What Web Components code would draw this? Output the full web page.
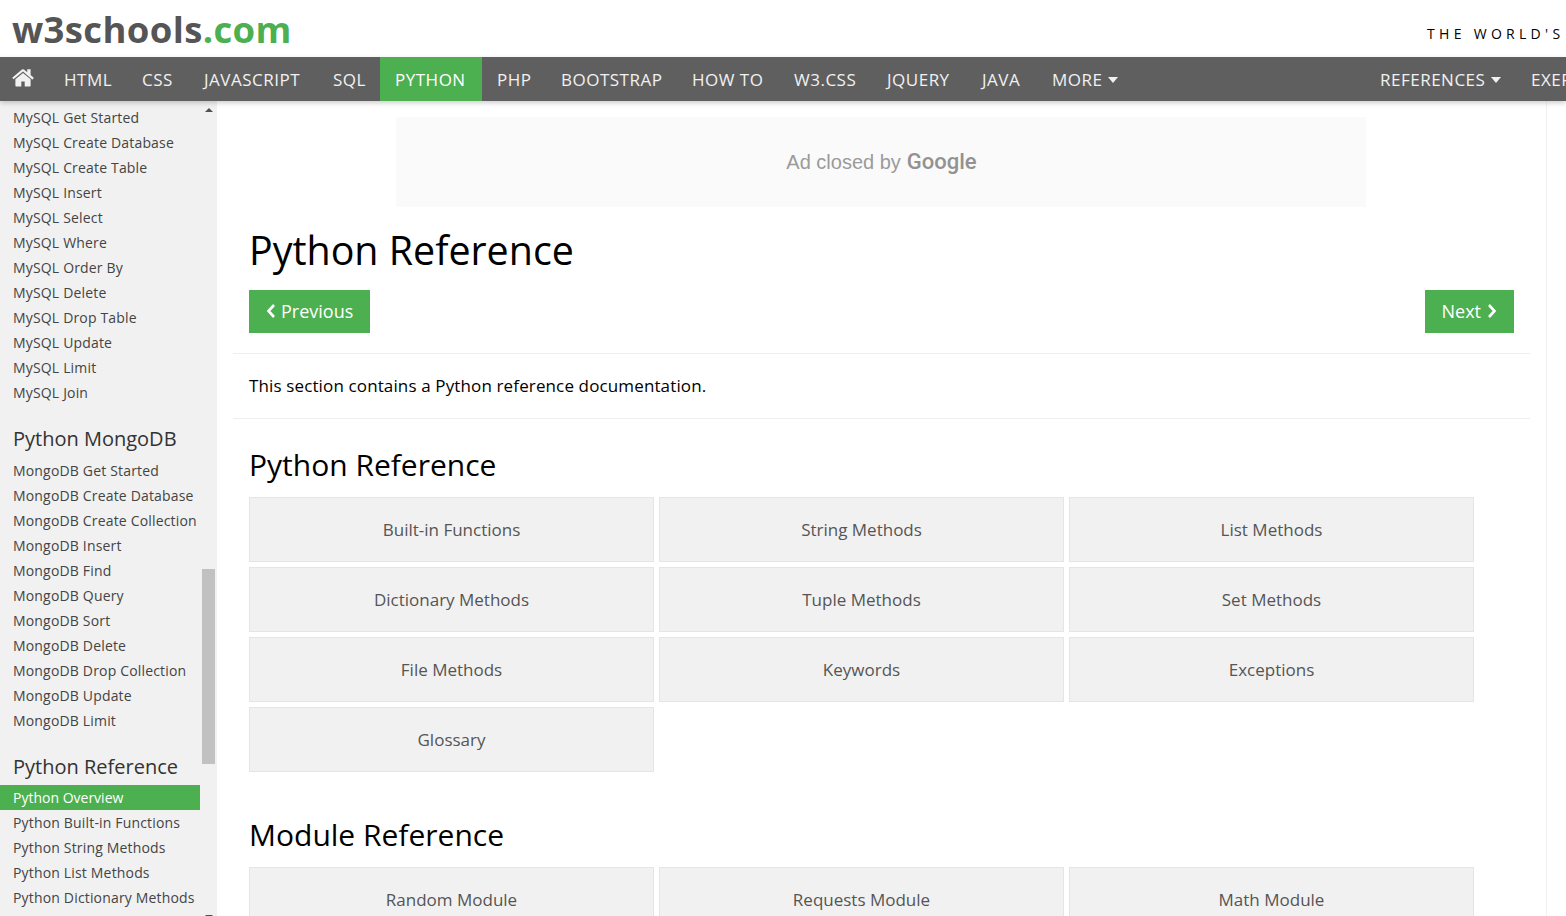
<!DOCTYPE html>
<html lang="en">
<head>
<meta charset="utf-8">
<title>Python Reference</title>
<style>
  html, body { margin: 0; height: 100%; overflow: hidden; background: #fff; }
  body { font-family: "Open Sans", "Noto Sans", sans-serif; display: flex; flex-direction: column; }
</style>
</head>
<body>

<w3-topbar></w3-topbar>

<w3-nav>
  <nav-link>HTML</nav-link>
  <nav-link>CSS</nav-link>
  <nav-link>JAVASCRIPT</nav-link>
  <nav-link>SQL</nav-link>
  <nav-link active>PYTHON</nav-link>
  <nav-link>PHP</nav-link>
  <nav-link>BOOTSTRAP</nav-link>
  <nav-link>HOW TO</nav-link>
  <nav-link>W3.CSS</nav-link>
  <nav-link>JQUERY</nav-link>
  <nav-link>JAVA</nav-link>
  <nav-link caret>MORE</nav-link>
  <nav-link slot="right" caret>REFERENCES</nav-link>
  <nav-link slot="right">EXERCISES</nav-link>
</w3-nav>

<page-body>
  <w3-sidebar slot="side">
    <side-link>MySQL Get Started</side-link>
    <side-link>MySQL Create Database</side-link>
    <side-link>MySQL Create Table</side-link>
    <side-link>MySQL Insert</side-link>
    <side-link>MySQL Select</side-link>
    <side-link>MySQL Where</side-link>
    <side-link>MySQL Order By</side-link>
    <side-link>MySQL Delete</side-link>
    <side-link>MySQL Drop Table</side-link>
    <side-link>MySQL Update</side-link>
    <side-link>MySQL Limit</side-link>
    <side-link>MySQL Join</side-link>
    <side-head>Python MongoDB</side-head>
    <side-link>MongoDB Get Started</side-link>
    <side-link>MongoDB Create Database</side-link>
    <side-link>MongoDB Create Collection</side-link>
    <side-link>MongoDB Insert</side-link>
    <side-link>MongoDB Find</side-link>
    <side-link>MongoDB Query</side-link>
    <side-link>MongoDB Sort</side-link>
    <side-link>MongoDB Delete</side-link>
    <side-link>MongoDB Drop Collection</side-link>
    <side-link>MongoDB Update</side-link>
    <side-link>MongoDB Limit</side-link>
    <side-head>Python Reference</side-head>
    <side-link active>Python Overview</side-link>
    <side-link>Python Built-in Functions</side-link>
    <side-link>Python String Methods</side-link>
    <side-link>Python List Methods</side-link>
    <side-link>Python Dictionary Methods</side-link>
  </w3-sidebar>

  <w3-main>
    <ad-box></ad-box>
    <h1-title>Python Reference</h1-title>
    <pager-row></pager-row>
    <intro-text>This section contains a Python reference documentation.</intro-text>

    <section-title>Python Reference</section-title>
    <ref-grid>
      <ref-btn>Built-in Functions</ref-btn>
      <ref-btn>String Methods</ref-btn>
      <ref-btn>List Methods</ref-btn>
      <ref-btn>Dictionary Methods</ref-btn>
      <ref-btn>Tuple Methods</ref-btn>
      <ref-btn>Set Methods</ref-btn>
      <ref-btn>File Methods</ref-btn>
      <ref-btn>Keywords</ref-btn>
      <ref-btn>Exceptions</ref-btn>
      <ref-btn>Glossary</ref-btn>
    </ref-grid>

    <section-title second>Module Reference</section-title>
    <ref-grid>
      <ref-btn>Random Module</ref-btn>
      <ref-btn>Requests Module</ref-btn>
      <ref-btn>Math Module</ref-btn>
    </ref-grid>
  </w3-main>
</page-body>

<script>
// small helper, every element below is just a style + markup
function simple(tag, html) {
  customElements.define(tag, class extends HTMLElement {
    constructor() {
      super();
      this.attachShadow({mode: 'open'}).innerHTML = html;
    }
  });
}

simple('w3-topbar', `
  <style>
    :host { display: flex; flex: none; height: 57px; align-items: flex-start; justify-content: space-between; overflow: hidden; background: #fff; }
    .logo { margin: 6px 0 0 12px; font: 700 36.5px/46px "Open Sans", sans-serif; letter-spacing: .35px; color: #555; white-space: nowrap; }
    .logo span { color: #4CAF50; }
    .tag { margin: 24px 0 0 0; width: 139px; font: 14px/20px "Open Sans", sans-serif; letter-spacing: 4.3px; color: #000; white-space: nowrap; }
  </style>
  <div class="logo">w3schools<span>.com</span></div>
  <div class="tag">THE WORLD'S</div>
`);

simple('w3-nav', `
  <style>
    :host { display: flex; flex: none; height: 44px; background: #5f5f5f; overflow: hidden; position: relative; z-index: 2; box-shadow: 0 2px 5px rgba(0,0,0,.2); }
    .home { display: flex; align-items: center; padding: 0 15px 0 12px; }
    .home svg { width: 22px; height: 20px; fill: #f1f1f1; margin-top: -3px; }
    .left { display: grid; grid-template-columns: 78px 62px 129px 62px 102px 64px 131px 102px 93px 95px 70px auto; }
    .right { display: grid; grid-template-columns: 151px auto; margin-left: auto; flex: none; width: 201px; }
  </style>
  <div class="home"><svg viewBox="0 0 1664 1408"><path d="M1408 800v480q0 26-19 45t-45 19H960V960H704v384H320q-26 0-45-19t-19-45V800q0-1 .5-3t.5-3l575-474 575 474q1 2 1 6zm223-69-62 74q-8 9-21 11h-3q-13 0-21-7L832 205 140 782q-12 8-24 7-13-2-21-11l-62-74q-8-10-7-23.5T37 659L756 60q32-26 76-26t76 26l244 204V69q0-14 9-23t23-9h192q14 0 23 9t9 23v408l219 182q10 8 11 21.500t-7 23.500z"/></svg></div>
  <div class="left"><slot></slot></div>
  <div class="right"><slot name="right"></slot></div>
`);

customElements.define('nav-link', class extends HTMLElement {
  constructor() {
    super();
    let caret = this.hasAttribute('caret') ? '<i></i>' : '';
    this.attachShadow({mode: 'open'}).innerHTML = `
      <style>
        :host { display: flex; box-sizing: border-box; align-items: center; padding: 2px 15px 0; font: 17px/42px "Open Sans", sans-serif; letter-spacing: .5px; color: #f1f1f1; white-space: nowrap; }
        :host([active]) { background: #4CAF50; color: #fff; }
        i { display: inline-block; margin: 0 0 0 6px; border: 5.5px solid transparent; border-top: 6px solid #f1f1f1; border-bottom: 0; }
      </style>
      <slot></slot>${caret}`;
  }
});

simple('page-body', `
  <style>
    :host { display: flex; flex: 1; min-height: 0; }
  </style>
  <slot name="side"></slot>
  <slot></slot>
`);

simple('w3-sidebar', `
  <style>
    :host { display: block; flex: none; position: relative; width: 217px; background: #f1f1f1; overflow: hidden; }
    .list { width: 200px; padding-top: 4px; }
    .thumb { position: absolute; left: 202px; top: 468px; width: 13px; height: 195px; background: #c1c1c1; }
    .up, .down { position: absolute; left: 205px; width: 0; height: 0; border: 4px solid transparent; }
    .up { top: 7px; border-bottom: 4px solid #505050; border-top: 0; }
    .down { bottom: -3px; border-top: 4px solid #505050; border-bottom: 0; }
  </style>
  <div class="list"><slot></slot></div>
  <div class="up"></div>
  <div class="thumb"></div>
  <div class="down"></div>
`);

simple('side-link', `
  <style>
    :host { display: block; height: 25px; padding-left: 13px; font: 14px/25px "Open Sans", sans-serif; letter-spacing: .17px; color: #444; white-space: nowrap; }
    :host([active]) { background: #4CAF50; color: #fff; letter-spacing: 0; }
  </style>
  <slot></slot>
`);

simple('side-head', `
  <style>
    :host { display: block; height: 52.5px; padding-left: 13px; font: 20px/27px "Open Sans", sans-serif; color: #333; white-space: nowrap; box-sizing: border-box; padding-top: 20px; }
  </style>
  <slot></slot>
`);

simple('w3-main', `
  <style>
    :host { display: block; flex: 1; min-width: 0; margin-right: 19px; padding: 16px 16px 0; border-right: 1px solid #f1f1f1; overflow: hidden; }
  </style>
  <slot></slot>
`);

simple('ad-box', `
  <style>
    :host { display: flex; width: 970px; height: 90px; margin-left: 163px; align-items: center; justify-content: center; gap: 6px; padding-bottom: 1px; box-sizing: border-box; background: #fafafa; }
    .txt { margin: 1px 0 0 1px; font: 20px "Liberation Sans", sans-serif; color: #9a9a9a; }
    .g { font: 500 22px Roboto, sans-serif; color: #929292; }
  </style>
  <span class="txt">Ad closed by</span><span class="g">Google</span>
`);

simple('h1-title', `
  <style>
    :host { display: block; height: 83px; padding-left: 16px; font: 39.4px/86px "Open Sans", sans-serif; color: #000; white-space: nowrap; }
  </style>
  <slot></slot>
`);

simple('pager-row', `
  <style>
    :host { display: flex; justify-content: space-between; padding: 0 16px 20px; border-bottom: 1px solid #eee; }
    .btn { display: flex; align-items: center; gap: 5px; height: 43px; box-sizing: border-box; padding: 0 17px 1px; font: 18px "Open Sans", sans-serif; color: #fff; background: #4CAF50; }
    .next { gap: 6px; }
    svg { width: 10px; height: 16px; fill: none; stroke: #fff; stroke-width: 2.6; }
  </style>
  <div class="btn"><svg viewBox="0 0 10 16"><path d="M8 2 2.500 8 8 14"/></svg>Previous</div>
  <div class="btn next">Next<svg viewBox="0 0 10 16"><path d="M2 2 7.500 8 2 14"/></svg></div>
`);

simple('intro-text', `
  <style>
    :host { display: block; padding-left: 16px; font: 17px/64px "Open Sans", sans-serif; letter-spacing: .13px; color: #000; border-bottom: 1px solid #eee; white-space: nowrap; }
  </style>
  <slot></slot>
`);

simple('section-title', `
  <style>
    :host { display: block; padding: 24px 0 10px 16px; font: 30px/44px "Open Sans", sans-serif; color: #000; white-space: nowrap; }
    :host([second]) { padding-top: 41px; }
  </style>
  <slot></slot>
`);

simple('ref-grid', `
  <style>
    :host { display: grid; grid-template-columns: repeat(3, 405px); grid-auto-rows: 65px; gap: 5px; padding-left: 16px; }
  </style>
  <slot></slot>
`);

simple('ref-btn', `
  <style>
    :host { display: flex; align-items: center; justify-content: center; box-sizing: border-box; border: 1px solid #e5e5e5; background: #f1f1f1; font: 17px "Open Sans", sans-serif; color: #555; }
  </style>
  <slot></slot>
`);
</script>
</body>
</html>
